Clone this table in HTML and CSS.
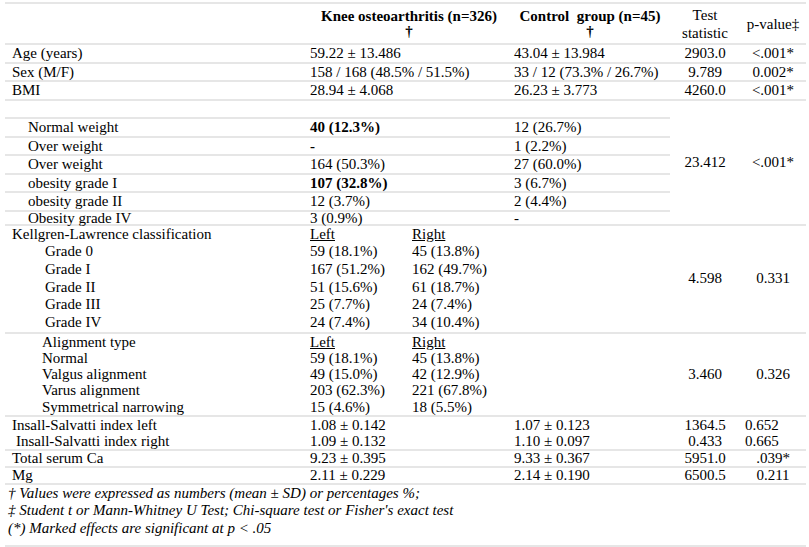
FILE: index.html
```html
<!DOCTYPE html>
<html>
<head>
<meta charset="utf-8">
<link rel="stylesheet" href="styles.css">
</head>
<body>
<table class="t">
<thead>
<tr class="hd">
<th class="c1"></th>
<th class="c2 bold"><div class="hl">Knee osteoarthritis (n=326)</div><div class="hl">†</div></th>
<th class="c3 bold"><div class="hl">Control&nbsp; group (n=45)</div><div class="hl">†</div></th>
<th class="c4 st">Test<br>statistic</th>
<th class="c5 pv">p-value‡</th>
</tr>
</thead>
<tbody>
<tr class="r"><td class="c1">Age (years)</td><td class="c2">59.22 ± 13.486</td><td class="c3">43.04 ± 13.984</td><td class="c4">2903.0</td><td class="c5">&lt;.001*</td></tr>
<tr class="r"><td class="c1">Sex (M/F)</td><td class="c2">158 / 168 (48.5% / 51.5%)</td><td class="c3">33 / 12 (73.3% / 26.7%)</td><td class="c4">9.789</td><td class="c5">0.002*</td></tr>
<tr class="r"><td class="c1">BMI</td><td class="c2">28.94 ± 4.068</td><td class="c3">26.23 ± 3.773</td><td class="c4">4260.0</td><td class="c5">&lt;.001*</td></tr>
<tr class="r"><td class="c1">&nbsp;</td><td class="c2">&nbsp;</td><td class="c3">&nbsp;</td><td class="c4" rowspan="7">23.412</td><td class="c5" rowspan="7">&lt;.001*</td></tr>
<tr class="r"><td class="c1 in1">Normal weight</td><td class="c2 bold">40 (12.3%)</td><td class="c3">12 (26.7%)</td></tr>
<tr class="r"><td class="c1 in1">Over weight</td><td class="c2 bold">-</td><td class="c3">1 (2.2%)</td></tr>
<tr class="r"><td class="c1 in1">Over weight</td><td class="c2">164 (50.3%)</td><td class="c3">27 (60.0%)</td></tr>
<tr class="r"><td class="c1 in1">obesity grade I</td><td class="c2 bold">107 (32.8%)</td><td class="c3">3 (6.7%)</td></tr>
<tr class="r"><td class="c1 in1">obesity grade II</td><td class="c2">12 (3.7%)</td><td class="c3">2 (4.4%)</td></tr>
<tr class="r short"><td class="c1 in1">Obesity grade IV</td><td class="c2">3 (0.9%)</td><td class="c3">-</td></tr>
<tr class="kl">
<td class="c1"><div>Kellgren-Lawrence classification</div><div class="in2">Grade 0</div><div class="in2">Grade I</div><div class="in2">Grade II</div><div class="in2">Grade III</div><div class="in2">Grade IV</div></td>
<td class="c2"><div class="lr"><span class="u">Left</span><span class="u">Right</span><span>59 (18.1%)</span><span>45 (13.8%)</span><span>167 (51.2%)</span><span>162 (49.7%)</span><span>51 (15.6%)</span><span>61 (18.7%)</span><span>25 (7.7%)</span><span>24 (7.4%)</span><span>24 (7.4%)</span><span>34 (10.4%)</span></div></td>
<td class="c3"></td><td class="c4">4.598</td><td class="c5">0.331</td>
</tr>
<tr class="al">
<td class="c1"><div class="in3">Alignment type</div><div class="in3">Normal</div><div class="in3">Valgus alignment</div><div class="in3">Varus alignment</div><div class="in3">Symmetrical narrowing</div></td>
<td class="c2"><div class="lr"><span class="u">Left</span><span class="u">Right</span><span>59 (18.1%)</span><span>45 (13.8%)</span><span>49 (15.0%)</span><span>42 (12.9%)</span><span>203 (62.3%)</span><span>221 (67.8%)</span><span>15 (4.6%)</span><span>18 (5.5%)</span></div></td>
<td class="c3"></td><td class="c4">3.460</td><td class="c5">0.326</td>
</tr>
<tr class="ins">
<td class="c1"><div>Insall-Salvatti index left</div><div class="in4">Insall-Salvatti index right</div></td>
<td class="c2"><div>1.08 ± 0.142</div><div>1.09 ± 0.132</div></td>
<td class="c3"><div>1.07 ± 0.123</div><div>1.10 ± 0.097</div></td>
<td class="c4"><div>1364.5</div><div>0.433</div></td>
<td class="c5 lft"><div>0.652</div><div>0.665</div></td>
</tr>
<tr class="sm"><td class="c1">Total serum Ca</td><td class="c2">9.23 ± 0.395</td><td class="c3">9.33 ± 0.367</td><td class="c4">5951.0</td><td class="c5">.039*</td></tr>
<tr class="sm"><td class="c1">Mg</td><td class="c2">2.11 ± 0.229</td><td class="c3">2.14 ± 0.190</td><td class="c4">6500.5</td><td class="c5">0.211</td></tr>
<tr class="fn"><td colspan="5"><div>† Values were expressed as numbers (mean ± SD) or percentages %;</div><div>‡ Student t or Mann-Whitney U Test; Chi-square test or Fisher's exact test</div><div>(*) Marked effects are significant at p &lt; .05</div></td></tr>
</tbody>
</table>
</body>
</html>
```
FILE: styles.css
```css
html, body {
  background: #ffffff;
}
body {
  margin: 2px 3px 0 5px;
  font-family: "Liberation Serif", "Times New Roman", serif;
  font-size: 15px;
  color: #000000;
}
.t {
  width: 801px;
  border-collapse: separate;
  border-spacing: 0;
  table-layout: fixed;
  border-top: 2px solid #e6e6e6;
}
.t th, .t td {
  padding: 0;
  border-bottom: 2px solid #e6e6e6;
  vertical-align: middle;
  text-align: left;
  font-weight: normal;
  white-space: nowrap;
}
.c1 { width: 296px; padding-left: 7px !important; }
.c2 { width: 200px; padding-left: 2px !important; }
.c3 { width: 156px; padding-left: 4px !important; }
.c4 { width: 70px; text-align: center !important; }
.c5 { width: 66px; text-align: center !important; }
.c5.lft { text-align: left !important; padding-left: 5px !important; width: 61px; }

.hd th { height: 37px; }
.hd .c2, .hd .c3 { text-align: center; padding-left: 0 !important; padding-top: 1px !important; }
.hd .c2 { width: 202px; }
.hd .c3 { width: 160px; }
.hl { line-height: 15px; }
.bold { font-weight: bold !important; }
.hd .st { line-height: 18px; vertical-align: bottom; padding-bottom: 1px !important; }
.hd .pv { padding-top: 2px !important; }

.r td { line-height: 16.5px; }
.r.short td { line-height: 12px; }

.in1 { padding-left: 23px !important; }
.in2 { padding-left: 33px; }
.in3 { padding-left: 30px; }
.in4 { padding-left: 4px; }

.lr {
  display: grid;
  grid-template-columns: 102px auto;
}
.u { text-decoration: underline; }

.kl td { line-height: 17.7px; }
.al td { line-height: 16.2px; }
.ins td { line-height: 16px; }
.sm td { line-height: 15px; }

.fn td {
  font-style: italic;
  line-height: 17.5px;
  padding: 0 0 8px 3px;
}
```
